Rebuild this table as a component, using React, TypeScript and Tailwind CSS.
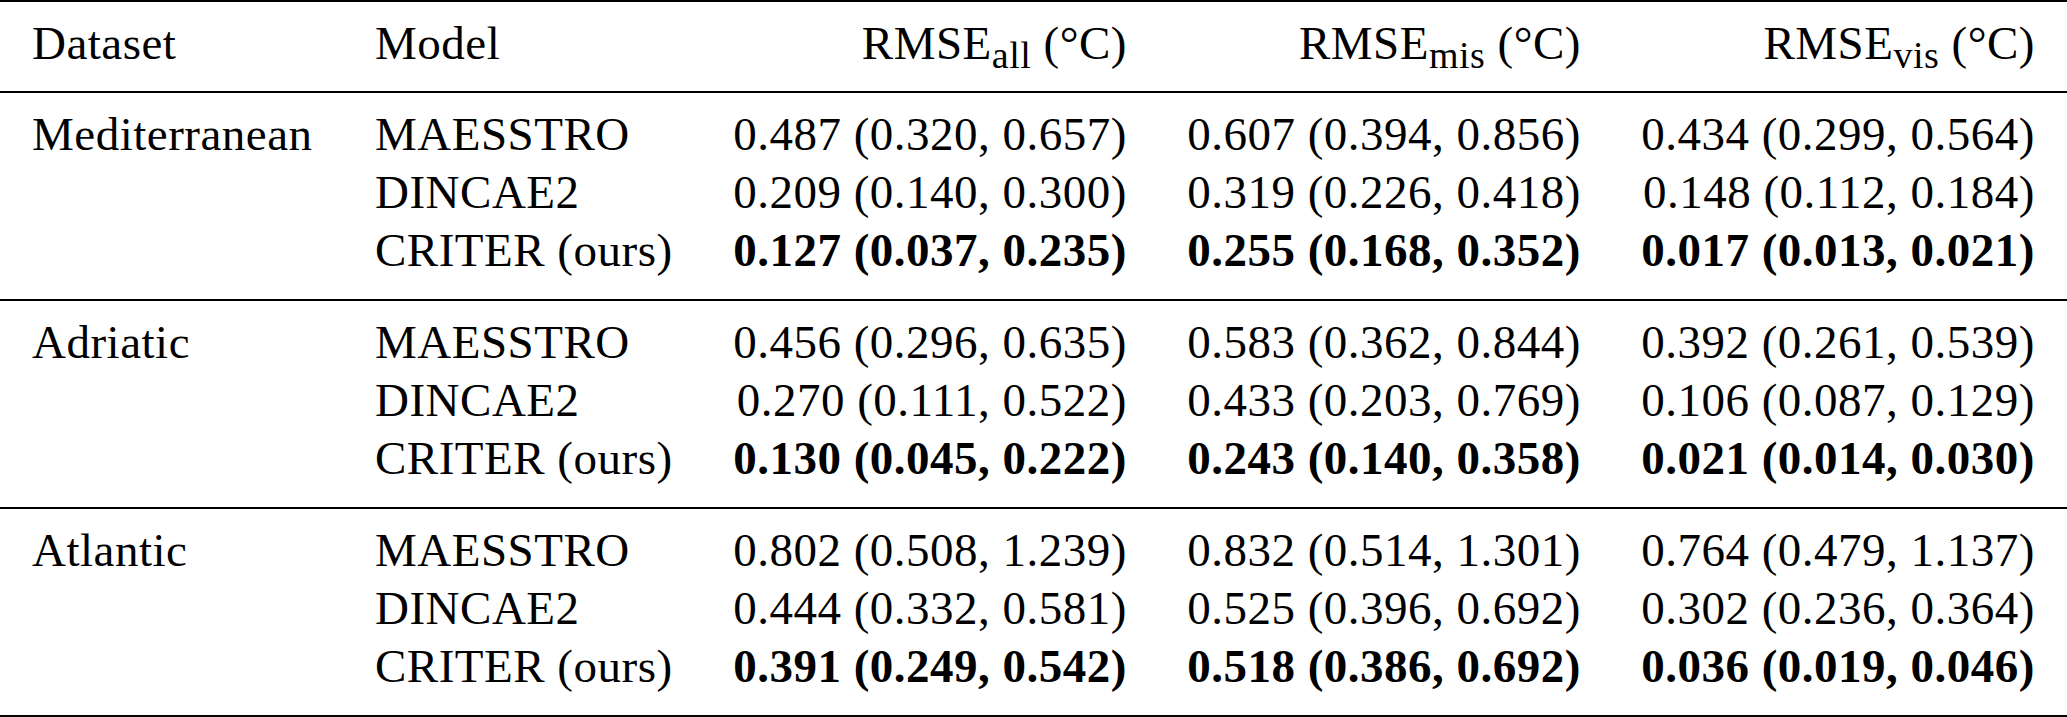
import type { ReactNode } from 'react';

type Cell = { v: string; lo: string; hi: string };
type Row = { model: string; ours?: boolean; all: Cell; mis: Cell; vis: Cell };
type Section = { dataset: string; rows: Row[] };

const c = (v: string, lo: string, hi: string): Cell => ({ v, lo, hi });

const sections: Section[] = [
  {
    dataset: 'Mediterranean',
    rows: [
      { model: 'MAESSTRO', all: c('0.487', '0.320', '0.657'), mis: c('0.607', '0.394', '0.856'), vis: c('0.434', '0.299', '0.564') },
      { model: 'DINCAE2', all: c('0.209', '0.140', '0.300'), mis: c('0.319', '0.226', '0.418'), vis: c('0.148', '0.112', '0.184') },
      { model: 'CRITER (ours)', ours: true, all: c('0.127', '0.037', '0.235'), mis: c('0.255', '0.168', '0.352'), vis: c('0.017', '0.013', '0.021') },
    ],
  },
  {
    dataset: 'Adriatic',
    rows: [
      { model: 'MAESSTRO', all: c('0.456', '0.296', '0.635'), mis: c('0.583', '0.362', '0.844'), vis: c('0.392', '0.261', '0.539') },
      { model: 'DINCAE2', all: c('0.270', '0.111', '0.522'), mis: c('0.433', '0.203', '0.769'), vis: c('0.106', '0.087', '0.129') },
      { model: 'CRITER (ours)', ours: true, all: c('0.130', '0.045', '0.222'), mis: c('0.243', '0.140', '0.358'), vis: c('0.021', '0.014', '0.030') },
    ],
  },
  {
    dataset: 'Atlantic',
    rows: [
      { model: 'MAESSTRO', all: c('0.802', '0.508', '1.239'), mis: c('0.832', '0.514', '1.301'), vis: c('0.764', '0.479', '1.137') },
      { model: 'DINCAE2', all: c('0.444', '0.332', '0.581'), mis: c('0.525', '0.396', '0.692'), vis: c('0.302', '0.236', '0.364') },
      { model: 'CRITER (ours)', ours: true, all: c('0.391', '0.249', '0.542'), mis: c('0.518', '0.386', '0.692'), vis: c('0.036', '0.019', '0.046') },
    ],
  },
];

// same column grid for header and body rows
const grid = 'grid grid-cols-[375px_300px_452px_454px_454px] pr-[32px]';

function Metric({ sub }: { sub: string }) {
  return (
    <span>
      RMSE<span className="text-[38px] leading-[0] align-[-9px]">{sub}</span> (°C)
    </span>
  );
}

function Num({ cell, bold }: { cell: Cell; bold?: boolean }): ReactNode {
  return (
    <div className={`text-right whitespace-nowrap ${bold ? 'font-bold' : ''}`}>
      {cell.v} ({cell.lo}, {cell.hi})
    </div>
  );
}

export default function App() {
  return (
    <div
      className="w-[2067px] bg-white text-black text-[47px] leading-[58px] tracking-[0.5px]"
      style={{ fontFamily: '"Liberation Serif", "Times New Roman", serif' }}
    >
      {/* header */}
      <div className={`${grid} border-t-2 border-black pt-[12px] pb-[19px]`}>
        <div className="pl-[32px]">Dataset</div>
        <div>Model</div>
        <div className="text-right whitespace-nowrap"><Metric sub="all" /></div>
        <div className="text-right whitespace-nowrap"><Metric sub="mis" /></div>
        <div className="text-right whitespace-nowrap"><Metric sub="vis" /></div>
      </div>

      {sections.map((s, si) => (
        <div
          key={s.dataset}
          className={`border-t-2 border-black pt-[12px] pb-[20px] ${si === sections.length - 1 ? 'border-b-2' : ''}`}
        >
          {s.rows.map((r, ri) => (
            <div key={r.model} className={grid}>
              <div className="pl-[32px]">{ri === 0 ? s.dataset : ''}</div>
              <div className="whitespace-nowrap">{r.model}</div>
              <Num cell={r.all} bold={r.ours} />
              <Num cell={r.mis} bold={r.ours} />
              <Num cell={r.vis} bold={r.ours} />
            </div>
          ))}
        </div>
      ))}
    </div>
  );
}
